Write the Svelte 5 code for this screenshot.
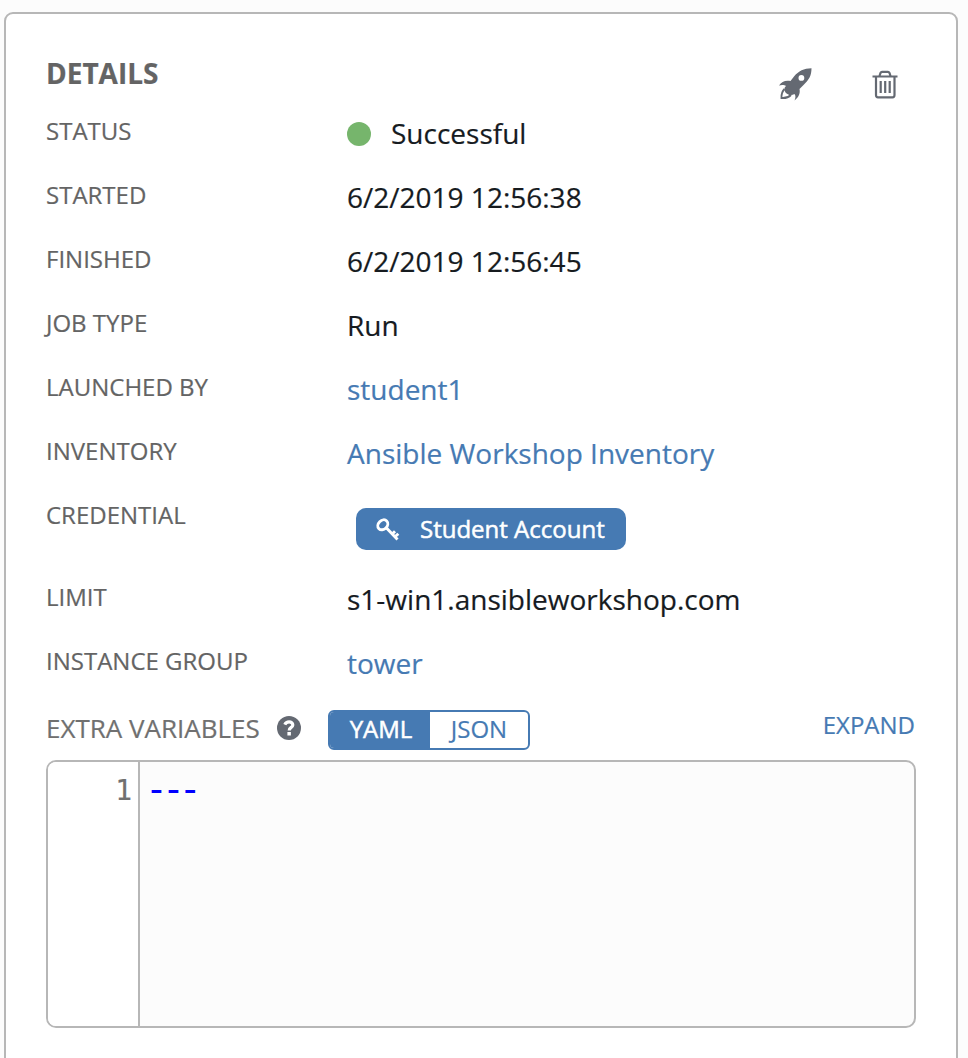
<script>
  const rows = [
    { label: 'STATUS', value: 'Successful', kind: 'status' },
    { label: 'STARTED', value: '6/2/2019 12:56:38' },
    { label: 'FINISHED', value: '6/2/2019 12:56:45' },
    { label: 'JOB TYPE', value: 'Run' },
    { label: 'LAUNCHED BY', value: 'student1', kind: 'link' },
    { label: 'INVENTORY', value: 'Ansible Workshop Inventory', kind: 'link' },
    { label: 'CREDENTIAL', value: 'Student Account', kind: 'tag' },
    { label: 'LIMIT', value: 's1-win1.ansibleworkshop.com' },
    { label: 'INSTANCE GROUP', value: 'tower', kind: 'link' }
  ];
  let format = $state('YAML');
</script>

<main class="panel">
  <header>
    <h1>DETAILS</h1>
    <div class="actions">
      <button aria-label="Relaunch">
        <svg width="34" height="34" viewBox="0 0 34 34">
          <path fill="#646972" fill-rule="evenodd" d="M33.500 .3C26 .5 20.500 3 16 8.500L12.500 13C7.500 12 3.500 13.500 1 17.500C4 16.500 6.500 17 8 18C6 19.500 6 22.500 7.500 24.500C9.500 27 13.500 28 16.500 26C18 28 17.500 30 16.500 32.500C20.500 29.500 22.500 25.500 21.500 21L25.500 17C31 12 33.500 7.500 33.500 .3ZM23.400 7A2.900 2.900 0 1 1 23.400 12.800A2.900 2.900 0 1 1 23.400 7Z" />
          <path fill="none" stroke="#646972" stroke-width="1.900" d="M6.500 21C4 23.500 3.300 26.500 3.500 30C7 30.300 10.500 29.500 13 27" />
        </svg>
      </button>
      <button class="delete" aria-label="Delete">
        <svg width="26" height="30" viewBox="0 0 26 30" fill="none" stroke="#646972" stroke-width="2.200">
          <path d="M.5 6.500H25.500M7.500 6L8.500 3Q9 1.800 10 1.800H16Q17 1.800 17.500 3L18.500 6M4 6.500V25Q4 27.300 6 27.300H20.500Q22.500 27.300 22.500 25V6.500M8.700 11V23M13.200 11V23M17.700 11V23" />
        </svg>
      </button>
    </div>
  </header>

  <dl>
    {#each rows as row}
      <div class="row" class:tall={row.kind === 'tag'}>
        <dt>{row.label}</dt>
        <dd>
          {#if row.kind === 'status'}
            <span class="dot"></span>{row.value}
          {:else if row.kind === 'link'}
            <a href="#top">{row.value}</a>
          {:else if row.kind === 'tag'}
            <span class="tag">
              <svg width="26" height="26" viewBox="0 0 26 26" fill="none" stroke="#fff" stroke-width="2.900">
                <ellipse cx="7.800" cy="8.800" rx="5.500" ry="4.400" transform="rotate(-45 7.800 8.800)" />
                <path d="M11.500 12L22.500 23.500M17.300 18L20 15.300M20.300 20.500L23.300 17.700" />
              </svg>
              {row.value}
            </span>
          {:else}
            {row.value}
          {/if}
        </dd>
      </div>
    {/each}
  </dl>

  <div class="toolbar">
    <span class="title">EXTRA VARIABLES</span>
    <svg class="help" width="24" height="24" viewBox="0 0 24 24">
      <circle cx="12" cy="12" r="12" fill="#646972" />
      <path d="M7.800 8.600C8.700 6.600 10.200 5.800 12.100 5.800C14.200 5.800 15.800 7.200 15.800 9C15.800 11.500 12.200 11.300 12.200 14.400" fill="none" stroke="#fff" stroke-width="3.200" />
      <path d="M10.400 16H13.900V19.500H10.400Z" fill="#fff" />
    </svg>
    <div class="toggle">
      {#each ['YAML', 'JSON'] as name}
        <button class:active={format === name} onclick={() => (format = name)}>{name}</button>
      {/each}
    </div>
    <a class="expand" href="#top">EXPAND</a>
  </div>

  <div class="editor">
    <div class="gutter">1</div>
    <pre>---</pre>
  </div>
</main>

<style>
  :global(body) { background: #fcfcfc; overflow: hidden; }
  .panel {
    box-sizing: border-box;
    width: 954px;
    height: 1080px;
    margin: 12px 0 0 4px;
    padding: 39px 41px 0 40px;
    border: 2px solid #b7b7b7;
    border-radius: 9px;
    background: #fff;
    font: 28px/40px 'Open Sans', sans-serif;
    color: #161b1f;
    -webkit-text-stroke: 0.2px currentColor;
  }
  header { display: flex; justify-content: space-between; height: 60px; }
  h1 { margin: 0; font-size: 28px; line-height: 40px; font-weight: 700; color: #646464; }
  .actions { display: flex; align-items: flex-start; gap: 60px; padding: 15px 17px 0 0; }
  button { padding: 0; border: 0; background: none; font: inherit; }
  .delete { margin-top: 2px; }
  svg { display: block; flex: none; }
  dl { margin: 0; }
  .row { display: grid; grid-template-columns: 301px 1fr; height: 64px; }
  .row.tall { height: 82px; }
  dt { padding-top: 2px; font-size: 24px; line-height: 32px; color: #646464; }
  dd { display: flex; align-items: flex-start; margin: 0; }
  a { color: #467ab3; text-decoration: none; }
  .dot { width: 24px; height: 24px; margin: 9px 20px 0 0; border-radius: 50%; background: #76b56c; }
  .tag {
    display: flex; align-items: center; gap: 19px; box-sizing: border-box;
    width: 270px; height: 42px; margin: 11px 0 0 9px; padding-left: 19px;
    border-radius: 10px; background: #467ab3; color: #fff; font-size: 24px;
    white-space: nowrap; -webkit-text-stroke: 0.5px #fff;
  }
  .toolbar { display: flex; height: 53px; }
  .title { width: 231px; font-size: 26px; line-height: 42px; color: #707070; white-space: nowrap; }
  .help { margin-top: 9px; }
  .toggle {
    display: flex; box-sizing: border-box; width: 202px; height: 40px; margin: 3px 0 0 27px;
    border: 2px solid #467ab3; border-radius: 6px; overflow: hidden;
  }
  .toggle button { flex: 1; height: 36px; padding-bottom: 2px; font-size: 24px; line-height: 34px; color: #467ab3; }
  .toggle .active { flex: 0 0 100px; padding-left: 2px; background: #467ab3; color: #fff; -webkit-text-stroke: 0.5px #fff; }
  .expand { margin-left: auto; font-size: 24px; line-height: 36px; }
  .editor {
    display: flex; box-sizing: border-box; width: 870px; height: 268px;
    border: 2px solid #b7b7b7; border-radius: 10px; background: #fcfcfc; overflow: hidden;
  }
  .gutter {
    box-sizing: border-box; width: 92px; padding: 9px 6px 0 0; border-right: 2px solid #b7b7b7;
    background: #fff; color: #707070; text-align: right; font: 28px/40px 'DejaVu Sans Mono', monospace;
  }
  pre {
    margin: 7px 0 0 5px; color: #00f; font: 38px/40px 'DejaVu Sans Mono', monospace;
    letter-spacing: -6px; -webkit-text-stroke: 0;
  }
</style>
